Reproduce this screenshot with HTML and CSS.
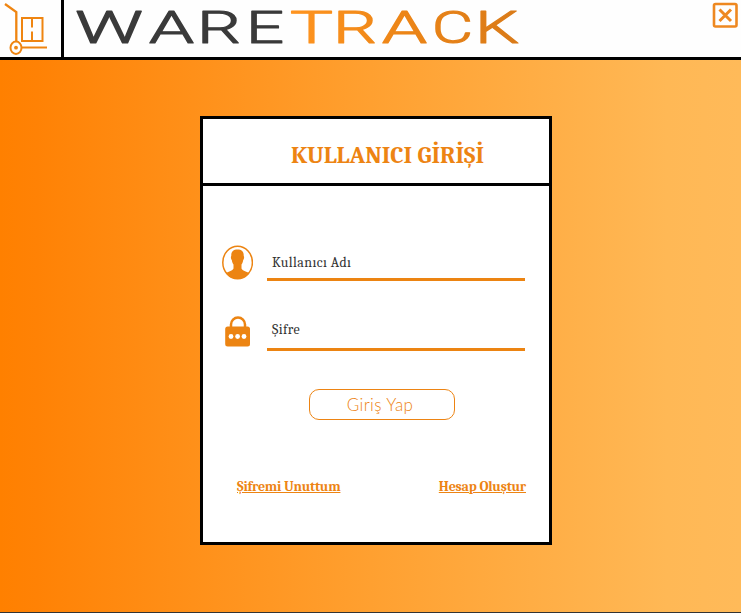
FILE: index.html
```
<!DOCTYPE html>
<html lang="tr">
<head>
<meta charset="utf-8">
<title>WareTrack</title>
<link rel="stylesheet" href="styles.css">
</head>
<body>
<header class="topbar">
  <div class="mark">
    <svg width="61" height="57" viewBox="0 0 61 57" fill="none" stroke="#ef8511" stroke-width="2">
      <path d="M5 4l11.300 8v30" stroke-width="2.3"/>
      <path d="M22 18h20.500v23H22zM32 18v9.500M32 31.500v9.500M21 47.500h26"/>
      <ellipse cx="16" cy="47.700" rx="5.500" ry="6.200"/>
      <circle cx="16" cy="47.700" r="1.900" fill="#ef8511" stroke="none"/>
    </svg>
  </div>
  <svg class="wordmark" width="460" height="57" viewBox="0 0 460 57">
    <defs>
      <linearGradient id="amber" gradientUnits="userSpaceOnUse" x1="227" y1="0" x2="456" y2="0">
        <stop offset="0" stop-color="#ff941f"/><stop offset=".5" stop-color="#ec8517"/><stop offset="1" stop-color="#d97a18"/>
      </linearGradient>
    </defs>
    <g fill="#3a3a3a" stroke="#3a3a3a">
      <text x="11" y="43" textLength="68" lengthAdjust="spacingAndGlyphs">W</text>
      <text x="85" y="43" textLength="45" lengthAdjust="spacingAndGlyphs">A</text>
      <text x="133" y="43" textLength="44" lengthAdjust="spacingAndGlyphs">R</text>
      <text x="182" y="43" textLength="38" lengthAdjust="spacingAndGlyphs">E</text>
    </g>
    <g fill="url(#amber)" stroke="url(#amber)">
      <text x="226" y="43" textLength="43" lengthAdjust="spacingAndGlyphs">T</text>
      <text x="269" y="43" textLength="44" lengthAdjust="spacingAndGlyphs">R</text>
      <text x="318" y="43" textLength="45" lengthAdjust="spacingAndGlyphs">A</text>
      <text x="368" y="43" textLength="41" lengthAdjust="spacingAndGlyphs">C</text>
      <text x="411" y="43" textLength="44" lengthAdjust="spacingAndGlyphs">K</text>
    </g>
  </svg>
  <button class="close" aria-label="Kapat">
    <svg width="26" height="26" viewBox="0 0 26 26" fill="none" stroke="#ee8820">
      <rect x="2" y="2" width="22.500" height="22.500" rx="1.500" stroke-width="2.600"/>
      <path d="M7.500 7.500l11.500 11.500M19 7.500L7.500 19" stroke-width="3"/>
    </svg>
  </button>
</header>
<main class="stage">
  <section class="card">
    <h1 class="title">KULLANICI GİRİŞİ</h1>
    <form class="form">
      <div class="field">
        <svg class="icon" width="32" height="36" viewBox="0 0 32 36">
          <ellipse cx="16.600" cy="17.500" rx="14.800" ry="16.300" fill="#fff" stroke="#ec8412" stroke-width="1.500"/>
          <path fill="#ec8412" d="M16.500 4.500c4.200 0 6.500 2 6.200 6.500 .7.300.5 3-.5 4-.3 2-1 3.500-1.700 4.500v4c1 2.500 4.500 2.800 8 4.500C25 32.500 20.500 34 16.500 34S8 32.500 4.800 28c3.200-1.700 6.700-2 7.700-4.500v-4c-.7-1-1.400-2.500-1.700-4.500-1-1-1.200-3.700-.5-4C10 6.500 12.300 4.500 16.500 4.500z"/>
        </svg>
        <label class="line user">Kullanıcı Adı</label>
      </div>
      <div class="field">
        <svg class="icon lock" width="32" height="36" viewBox="0 0 32 36">
          <path d="M10 15V9.500a7 7 0 0 1 14 0V15" fill="none" stroke="#ec8412" stroke-width="2.500"/>
          <rect x="4.200" y="11.500" width="24.800" height="20" rx="2.500" fill="#ec8412"/>
          <g fill="#fff"><circle cx="10" cy="21.500" r="2.400"/><circle cx="16.600" cy="21.500" r="2.400"/><circle cx="23" cy="21.500" r="2.400"/></g>
        </svg>
        <label class="line pass">Şifre</label>
      </div>
      <button class="submit" type="button">Giriş Yap</button>
      <nav class="links"><a class="forgot">Şifremi Unuttum</a><a class="create">Hesap Oluştur</a></nav>
    </form>
  </section>
</main>
</body>
</html>
```
FILE: styles.css
```
* { box-sizing: border-box; }
body {
  margin: 0;
  height: 613px;
  display: flex;
  flex-direction: column;
  overflow: hidden;
  font-family: Cambria, Caladea, "Liberation Serif", serif;
}
.topbar {
  height: 60px;
  flex: none;
  display: flex;
  background: #fefefe;
  border-bottom: 3px solid #000;
}
.mark { width: 64px; border-right: 3px solid #000; }
.mark svg, .wordmark, .close svg, .icon { display: block; }
.wordmark {
  font-family: Roboto, sans-serif;
  font-weight: 300;
  font-size: 43.5px;
  stroke-width: 1.1px;
  stroke-linejoin: round;
}
.close {
  margin: 2px 3px 0 auto;
  padding: 0;
  border: 0;
  background: none;
  width: 26px;
  height: 26px;
}
.stage {
  flex: 1;
  padding: 56px 0 0 200px;
  border-bottom: 1px solid #333;
  background: linear-gradient(90deg, #ff8000 0%, #ff8205 5%, #ffa030 50%, #ffb855 90%, #ffba59 100%);
}
.card {
  width: 352px;
  height: 429px;
  background: #fff;
  border: 3px solid #000;
}
.title {
  margin: 0;
  height: 67px;
  padding: 22px 0 0 88px;
  border-bottom: 3px solid #000;
  color: #ed8413;
  font-size: 24px;
  line-height: 28px;
  white-space: nowrap;
}
.form { padding: 57px 23px 0 18px; }
.field { display: flex; height: 70px; }
.icon { margin-top: 2px; flex: none; }
.line {
  margin-left: 14px;
  width: 258px;
  height: 38px;
  padding: 11px 0 0 5px;
  border-bottom: 3px solid #ec8412;
  color: #333;
  font-size: 14px;
  line-height: 18px;
  letter-spacing: 0.4px;
}
.pass { padding-top: 8px; }
.submit {
  display: block;
  width: 146px;
  height: 31px;
  margin: 6px 0 0 88px;
  padding: 0 4px 0 0;
  border: 1px solid #ed8413;
  border-radius: 10px;
  background: #fff;
  color: #ed8413;
  font: 300 17px/29px "Century Gothic", Lato, sans-serif;
  letter-spacing: 0.4px;
}
.links {
  display: flex;
  justify-content: space-between;
  padding: 57px 0 0 16px;
  font-size: 14px;
  line-height: 20px;
  font-weight: bold;
  color: #ed8413;
  letter-spacing: -0.22px;
}
.links a { text-decoration: underline; }
```
